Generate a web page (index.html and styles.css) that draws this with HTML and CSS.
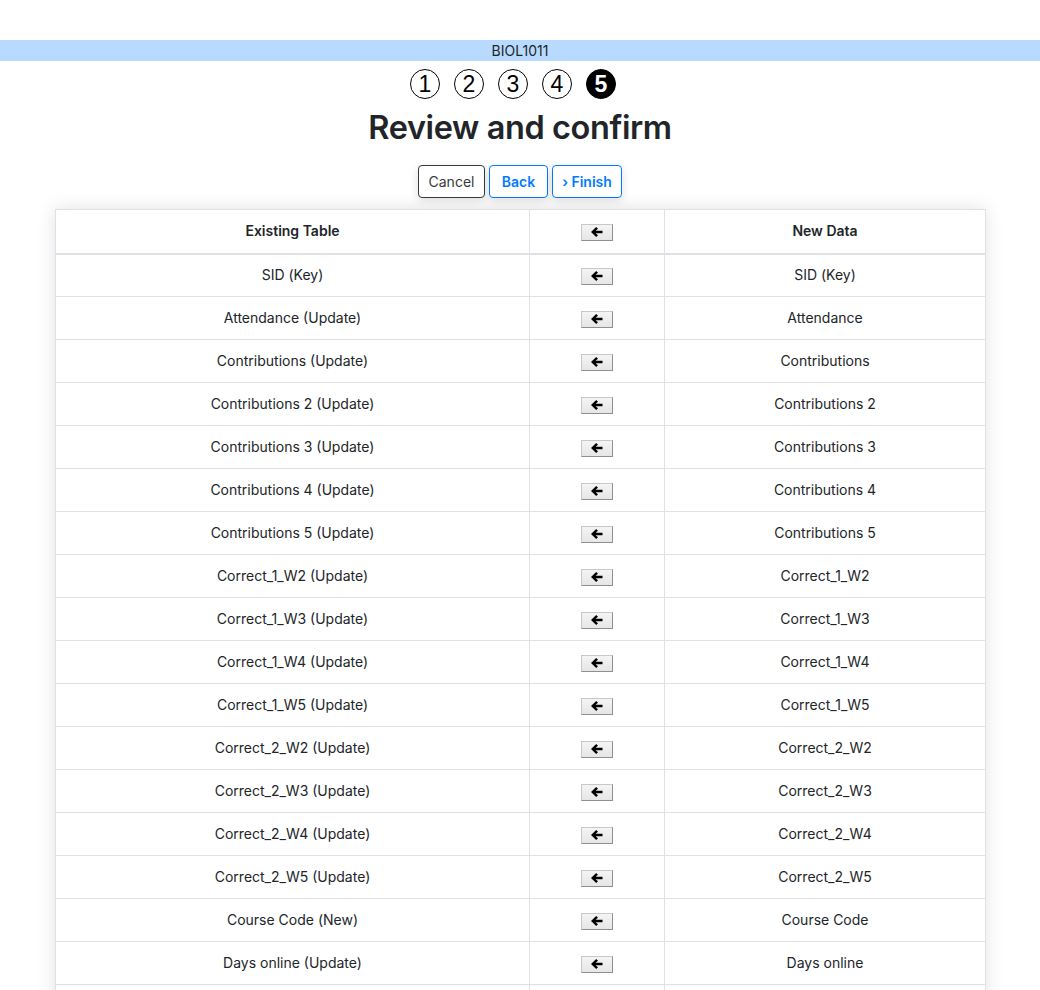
FILE: index.html
```html
<!DOCTYPE html>
<html>
<head>
<meta charset="utf-8">
<link rel="stylesheet" href="styles.css">
</head>
<body>
<div class="page">
  <div class="course-bar">BIOL1011</div>
  <div class="steps">
    <span class="step">1</span>
    <span class="step">2</span>
    <span class="step">3</span>
    <span class="step">4</span>
    <span class="step active">5</span>
  </div>
  <h1 class="title">Review and confirm</h1>
  <div class="actions">
    <button class="btn btn-dark btn-cancel">Cancel</button>
    <button class="btn btn-primary btn-back">Back</button>
    <button class="btn btn-primary btn-finish">› Finish</button>
  </div>
  <div class="table-wrap">
    <table class="map-table">
      <thead>
        <tr>
          <th class="col-a">Existing Table</th>
          <th class="col-b"><span class="arrow-btn"><svg viewBox="0 0 14 12" width="14" height="12"><path d="M1 6 L6.2 0.9 L8 2.7 L5.6 4.8 L12.5 4.8 L12.5 7.2 L5.6 7.2 L8 9.3 L6.2 11.1 Z" fill="#000"/></svg></span></th>
          <th class="col-c">New Data</th>
        </tr>
      </thead>
      <tbody id="rows"></tbody>
    </table>
  </div>
</div>
<script src="app.js"></script>
</body>
</html>
```
FILE: app.js
```js
const rows = [
  ["SID (Key)", "SID (Key)"],
  ["Attendance (Update)", "Attendance"],
  ["Contributions (Update)", "Contributions"],
  ["Contributions 2 (Update)", "Contributions 2"],
  ["Contributions 3 (Update)", "Contributions 3"],
  ["Contributions 4 (Update)", "Contributions 4"],
  ["Contributions 5 (Update)", "Contributions 5"],
  ["Correct_1_W2 (Update)", "Correct_1_W2"],
  ["Correct_1_W3 (Update)", "Correct_1_W3"],
  ["Correct_1_W4 (Update)", "Correct_1_W4"],
  ["Correct_1_W5 (Update)", "Correct_1_W5"],
  ["Correct_2_W2 (Update)", "Correct_2_W2"],
  ["Correct_2_W3 (Update)", "Correct_2_W3"],
  ["Correct_2_W4 (Update)", "Correct_2_W4"],
  ["Correct_2_W5 (Update)", "Correct_2_W5"],
  ["Course Code (New)", "Course Code"],
  ["Days online (Update)", "Days online"],
  ["Final Grade (Update)", "Final Grade"]
];
const arrow = '<span class="arrow-btn"><svg viewBox="0 0 14 12" width="14" height="12"><path d="M1 6 L6.2 0.9 L8 2.7 L5.6 4.8 L12.5 4.8 L12.5 7.2 L5.6 7.2 L8 9.3 L6.2 11.1 Z" fill="#000"/></svg></span>';
const tbody = document.getElementById("rows");
tbody.innerHTML = rows.map(r =>
  `<tr><td>${r[0]}</td><td>${arrow}</td><td>${r[1]}</td></tr>`
).join("");
```
FILE: styles.css
```css
* { box-sizing: border-box; }
html, body { margin: 0; padding: 0; background: #fff; }
body {
  font-family: "Inter", "Liberation Sans", sans-serif;
  color: #212529;
  font-size: 14px;
}
.page { padding-top: 40px; }
.course-bar {
  background: #b8daff;
  height: 21px;
  line-height: 21px;
  text-align: center;
  font-size: 14px;
  color: #212529;
}
.steps {
  display: flex;
  justify-content: center;
  gap: 14px;
  margin-top: 8px;
  padding-right: 14px;
}
.step {
  width: 30px;
  height: 30px;
  border: 1.5px solid #000;
  border-radius: 50%;
  display: flex;
  align-items: center;
  justify-content: center;
  font-size: 23px;
  line-height: 1;
  color: #000;
  font-family: "Liberation Sans", sans-serif;
}
.step.active {
  background: #000;
  color: #fff;
  font-weight: bold;
}
.title {
  margin: 9px 0 0;
  text-align: center;
  font-size: 32.5px;
  font-weight: 600;
  line-height: 40px;
  color: #212529;
  letter-spacing: -0.4px;
}
.actions {
  display: flex;
  justify-content: center;
  gap: 4px;
  margin-top: 17px;
}
.btn {
  height: 33px;
  padding: 0;
  font-family: inherit;
  font-size: 14px;
  background: #fff;
  border-radius: 4px;
  border: 1px solid;
  box-shadow: 0 3px 10px rgba(0,0,0,0.12);
  cursor: pointer;
}
.btn-cancel { width: 67px; }
.btn-back { width: 59px; }
.btn-finish { width: 70px; }
.btn-dark { border-color: #343a40; color: #343a40; }
.btn-primary { border-color: #007bff; color: #007bff; font-weight: 600; }
.table-wrap {
  width: 930px;
  margin: 11px 0 0 55px;
  box-shadow: 0 0 18px rgba(0,0,0,0.12);
}
.map-table {
  width: 100%;
  border-collapse: collapse;
  border: 1px solid #dee2e6;
  table-layout: fixed;
}
.map-table th, .map-table td {
  text-align: center;
  vertical-align: middle;
  border: 1px solid #dee2e6;
  padding: 0 12px;
  height: 43px;
  line-height: 20px;
}
.map-table th {
  font-weight: 600;
  border-bottom: 2px solid #dee2e6;
  height: 44px;
}
.map-table tr:first-child td { border-top: none; }
.col-a { width: 474px; }
.col-b { width: 135px; }
.col-c { width: 321px; }
.arrow-btn {
  display: inline-flex;
  align-items: center;
  justify-content: center;
  width: 32px;
  height: 17px;
  vertical-align: middle;
  background: linear-gradient(#f4f4f4, #e6e6e6);
  border: 1px solid #8f8f8f;
  border-top-color: #c8c8c8;
  border-left-color: #c8c8c8;
  border-right-color: #8f8f8f;
}
```
